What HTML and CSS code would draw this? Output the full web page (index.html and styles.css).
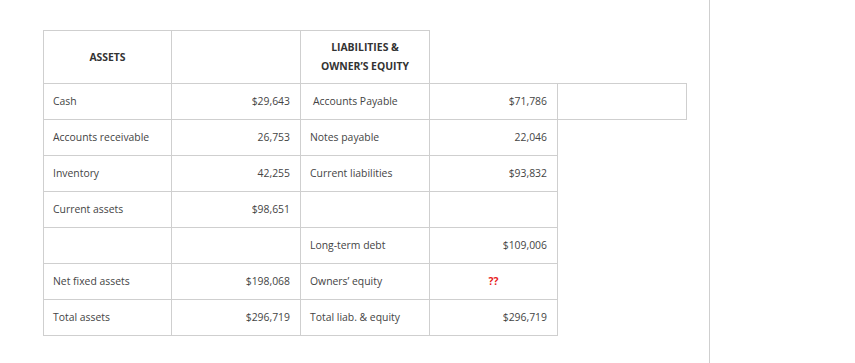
FILE: index.html
```html
<!DOCTYPE html>
<html>
<head>
<meta charset="utf-8">
<link rel="stylesheet" href="styles.css">
</head>
<body>
<div class="page">
  <main class="main">
    <table class="sheet">
      <colgroup>
        <col class="c1"><col class="c2"><col class="c3"><col class="c4"><col class="c5">
      </colgroup>
      <tr class="head">
        <th>ASSETS</th>
        <th></th>
        <th>LIABILITIES &amp;<br>OWNER’S EQUITY</th>
      </tr>
      <tr>
        <td>Cash</td><td class="num">$29,643</td><td class="lab">Accounts Payable</td><td class="num">$71,786</td><td></td>
      </tr>
      <tr>
        <td>Accounts receivable</td><td class="num">26,753</td><td>Notes payable</td><td class="num">22,046</td>
      </tr>
      <tr>
        <td>Inventory</td><td class="num">42,255</td><td>Current liabilities</td><td class="num">$93,832</td>
      </tr>
      <tr>
        <td>Current assets</td><td class="num">$98,651</td><td></td><td></td>
      </tr>
      <tr>
        <td></td><td></td><td>Long-term debt</td><td class="num">$109,006</td>
      </tr>
      <tr>
        <td>Net fixed assets</td><td class="num">$198,068</td><td>Owners’ equity</td><td class="q">??</td>
      </tr>
      <tr>
        <td>Total assets</td><td class="num">$296,719</td><td>Total liab. &amp; equity</td><td class="num">$296,719</td>
      </tr>
    </table>
  </main>
  <aside class="side"></aside>
</div>
</body>
</html>
```

FILE: styles.css
```css
html, body {
  margin: 0;
  padding: 0;
  background: #fff;
}
body {
  font-family: "Open Sans", "DejaVu Sans", sans-serif;
  font-size: 10.4px;
  color: #444;
}
.page {
  display: flex;
  height: 363px;
}
.main {
  width: 666px;
  padding: 30px 0 0 43px;
}
.side {
  flex: 1;
  border-left: 1px solid #cfcfcf;
}
.sheet {
  border-collapse: collapse;
  table-layout: fixed;
  width: 644px;
}
.c1 { width: 128px; }
.c2 { width: 129px; }
.c3 { width: 129px; }
.c4 { width: 128px; }
.c5 { width: 129px; }
.sheet th,
.sheet td {
  border: 1px solid #cfcfcf;
  padding: 10px 9px;
  line-height: 15px;
  text-align: left;
  vertical-align: middle;
  white-space: nowrap;
}
.sheet .head th {
  font-weight: 700;
  text-align: center;
  color: #333;
  padding: 7px 9px;
  line-height: 19px;
}
.sheet td.num {
  text-align: right;
  padding-right: 10px;
}
.sheet td.lab {
  padding-left: 12px;
}
.sheet td.q {
  text-align: center;
  color: #e8201c;
  font-weight: 700;
}
```
